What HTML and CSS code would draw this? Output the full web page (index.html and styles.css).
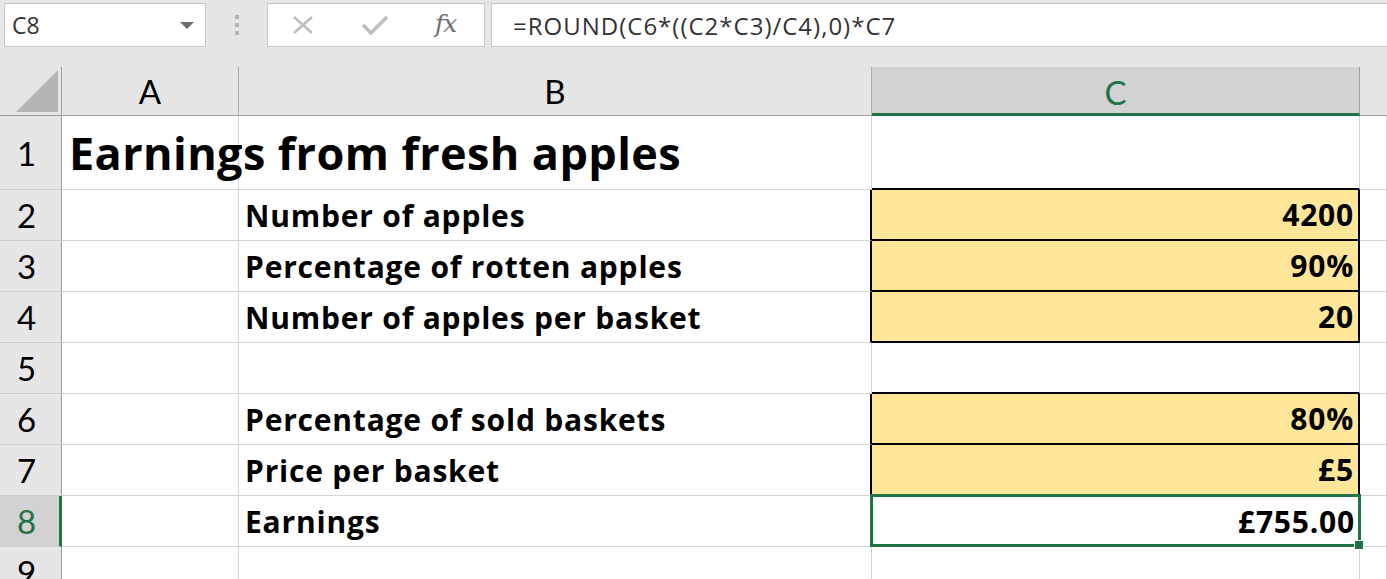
FILE: index.html
```html
<!DOCTYPE html>
<html>
<head>
<meta charset="utf-8">
<link rel="stylesheet" href="styles.css">
</head>
<body>
<div class="app">
  <div class="toolbar">
    <div class="namebox">
      <span class="name">C8</span>
      <svg class="caret" width="14" height="8" viewBox="0 0 14 8"><path d="M0 0H14L7 7Z" fill="#6b6b6b"/></svg>
    </div>
    <div class="grip"><span></span><span></span><span></span></div>
    <div class="btnbox">
      <svg class="icon" width="24" height="20" viewBox="0 0 24 20"><path d="M3 2L21 18M21 2L3 18" stroke="#bdbdbd" stroke-width="2.6" fill="none"/></svg>
      <svg class="icon" width="28" height="20" viewBox="0 0 28 20"><path d="M2 10L10 18L26 2" stroke="#bdbdbd" stroke-width="3.4" fill="none"/></svg>
      <span class="fx">fx</span>
    </div>
    <div class="formula">=ROUND(C6*((C2*C3)/C4),0)*C7</div>
  </div>
  <div class="sheet">
    <div class="corner"><svg width="42" height="42" viewBox="0 0 42 42"><path d="M42 0V42H0Z" fill="#b4b4b4"/></svg></div>
    <div class="ch">A</div>
    <div class="ch">B</div>
    <div class="ch sel">C</div>
    <div class="ch last"></div>

    <div class="rh">1</div>
    <div class="c"><span class="title">Earnings from fresh apples</span></div>
    <div class="c"></div>
    <div class="c bb"></div>
    <div class="c"></div>

    <div class="rh">2</div>
    <div class="c"></div>
    <div class="c br">Number of apples</div>
    <div class="c y">4200</div>
    <div class="c"></div>

    <div class="rh">3</div>
    <div class="c"></div>
    <div class="c br">Percentage of rotten apples</div>
    <div class="c y">90%</div>
    <div class="c"></div>

    <div class="rh">4</div>
    <div class="c"></div>
    <div class="c br">Number of apples per basket</div>
    <div class="c y">20</div>
    <div class="c"></div>

    <div class="rh">5</div>
    <div class="c"></div>
    <div class="c"></div>
    <div class="c bb"></div>
    <div class="c"></div>

    <div class="rh">6</div>
    <div class="c"></div>
    <div class="c br">Percentage of sold baskets</div>
    <div class="c y">80%</div>
    <div class="c"></div>

    <div class="rh">7</div>
    <div class="c"></div>
    <div class="c br">Price per basket</div>
    <div class="c y">£5</div>
    <div class="c"></div>

    <div class="rh rsel">8</div>
    <div class="c"></div>
    <div class="c">Earnings</div>
    <div class="c num active">£755.00</div>
    <div class="c"></div>

    <div class="rh">9</div>
    <div class="c"></div>
    <div class="c"></div>
    <div class="c"></div>
    <div class="c"></div>
  </div>
</div>
</body>
</html>
```

FILE: styles.css
```css
* { box-sizing: border-box; }
html, body { margin: 0; padding: 0; }
body {
  width: 1387px;
  height: 579px;
  overflow: hidden;
  background: #e6e6e6;
}
.app { width: 1387px; height: 579px; overflow: hidden; }

.toolbar {
  height: 67px;
  display: flex;
  align-items: flex-start;
  padding-top: 3px;
  padding-left: 4px;
  font-family: "Open Sans", sans-serif;
}
.namebox {
  width: 202px;
  height: 44px;
  background: #fff;
  border: 1px solid #c6c6c6;
  display: flex;
  align-items: center;
  justify-content: space-between;
  padding: 0 11px 0 7px;
}
.name { font-size: 23px; color: #333; }
.caret { margin-top: 2px; }
.grip {
  width: 61px;
  height: 44px;
  display: flex;
  flex-direction: column;
  align-items: center;
  justify-content: center;
  gap: 4px;
}
.grip span { width: 4px; height: 4px; background: #b3b3b3; }
.btnbox {
  width: 218px;
  height: 44px;
  background: #fff;
  border: 1px solid #c6c6c6;
  display: flex;
  align-items: center;
  padding-left: 23px;
}
.btnbox .icon:first-child { margin-right: 46px; }
.btnbox .icon:nth-child(2) { margin-right: 46px; }
.fx {
  font-family: "DejaVu Serif", "Liberation Serif", serif;
  font-style: italic;
  font-size: 25px;
  color: #6f6f6f;
  letter-spacing: -1px;
  margin-top: -4px;
}
.formula {
  margin-left: 6px;
  flex: 1;
  height: 44px;
  background: #fff;
  border: 1px solid #c6c6c6;
  border-right: none;
  display: flex;
  align-items: center;
  padding-left: 21px;
  font-size: 24px;
  color: #333;
  letter-spacing: 1px;
}

.sheet {
  display: grid;
  grid-template-columns: 62px 177px 633px 488px 27px;
  grid-template-rows: 49px 74px repeat(8, 51px);
  background: #fff;
  font-family: "Open Sans", Lato, sans-serif;
}
.corner {
  background: #e6e6e6;
  border-right: 1px solid #9e9e9e;
  border-bottom: 1px solid #9e9e9e;
  display: flex;
  align-items: flex-end;
  justify-content: flex-end;
  padding: 0 3px 3px 0;
}
.ch {
  background: #e6e6e6;
  border-right: 1px solid #ababab;
  border-bottom: 1px solid #9e9e9e;
  display: flex;
  align-items: center;
  justify-content: center;
  font-family: Lato, sans-serif;
  font-size: 33px;
  color: #000;
}
.ch.last { border-right: none; }
.ch.sel {
  background: #d2d2d2;
  color: #217346;
  border-bottom: 3px solid #217346;
  border-right: 1px solid #9e9e9e;
  padding-top: 3px;
}
.rh {
  background: #e6e6e6;
  border-right: 1px solid #9e9e9e;
  border-bottom: 1px solid #d0d0d0;
  display: flex;
  align-items: center;
  justify-content: center;
  font-family: Lato, sans-serif;
  font-size: 33px;
  color: #000;
  padding-right: 8px;
}
.rh.rsel {
  background: #d2d2d2;
  color: #217346;
  border-right: 3px solid #217346;
  padding-right: 6px;
}
.c {
  border-right: 1px solid #d4d4d4;
  border-bottom: 1px solid #d4d4d4;
  display: flex;
  align-items: center;
  padding: 0 6px;
  font-size: 30px;
  font-weight: 700;
  letter-spacing: 0.8px;
  color: #000;
  white-space: nowrap;
  min-width: 0;
}
.title { font-size: 45px; font-weight: 700; letter-spacing: 0.4px; padding-left: 1px; }
.c.br { border-right: 2px solid #000; }
.c.bb { border-bottom: 2px solid #000; }
.c.y {
  background: #ffe699;
  border-right: 2px solid #000;
  border-bottom: 2px solid #000;
  justify-content: flex-end;
  padding-right: 4px;
}
.c.num { justify-content: flex-end; padding-right: 4px; }
.c.active { position: relative; }
.c.active::before {
  content: "";
  position: absolute;
  left: -2px;
  top: -2px;
  right: -2px;
  bottom: -1px;
  border: 3px solid #217346;
}
.c.active::after {
  content: "";
  position: absolute;
  right: -5px;
  bottom: -4px;
  width: 8px;
  height: 8px;
  background: #217346;
  border: 1px solid #fff;
}
```
